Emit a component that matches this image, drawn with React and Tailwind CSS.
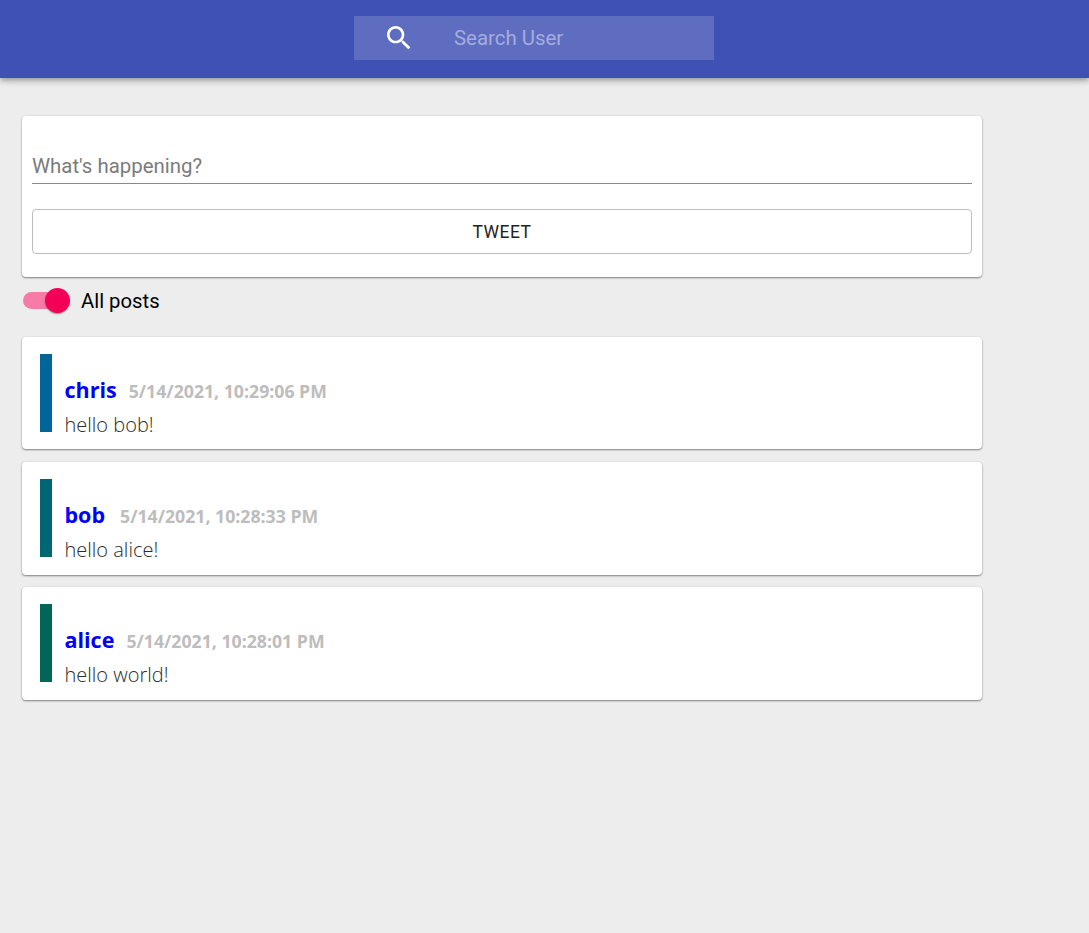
import React from "react";

const posts = [
  { name: "chris", date: "5/14/2021, 10:29:06 PM", text: "hello bob!", bar: "bg-[#006699]", gap: "ml-3" },
  { name: "bob", date: "5/14/2021, 10:28:33 PM", text: "hello alice!", bar: "bg-[#006673]", gap: "ml-[15px]" },
  { name: "alice", date: "5/14/2021, 10:28:01 PM", text: "hello world!", bar: "bg-[#006657]", gap: "ml-3" },
];

const shadow = "shadow-[0_1px_2px_0_rgba(0,0,0,0.45),0_0_2px_0_rgba(0,0,0,0.08)]";

export default function App() {
  return (
    <div className="min-h-[933px] bg-[#ededed] font-['Roboto',sans-serif]">
      <header className="h-[78px] bg-[#3f51b5] pt-4 shadow-[0_2px_4px_-1px_rgba(0,0,0,0.2),0_4px_5px_0_rgba(0,0,0,0.14),0_1px_10px_0_rgba(0,0,0,0.12)]">
        <div className="ml-[354px] flex h-11 w-[360px] items-center bg-[#5f6dc0]">
          <svg className="ml-[29px] h-8 w-8 shrink-0" viewBox="0 0 24 24" fill="#fff">
            <path d="M15.5 14h-.79l-.28-.27C15.41 12.59 16 11.11 16 9.5 16 5.91 13.09 3 9.5 3S3 5.91 3 9.5 5.91 16 9.5 16c1.61 0 3.09-.59 4.23-1.57l.27.28v.79l5 4.99L20.49 19l-4.99-5zm-6 0C7.01 14 5 11.99 5 9.5S7.01 5 9.5 5 14 7.01 14 9.5 11.99 14 9.5 14z" />
          </svg>
          <span className="ml-[39px] text-[20.4px] leading-6 text-[#a4acdc]">Search User</span>
        </div>
      </header>

      <main className="ml-[22px] w-[960px] pt-[38px]">
        <section className={`h-[161px] rounded bg-white px-2.5 pt-[35px] ${shadow}`}>
          <div className="h-[33px] border-b border-[#8a8a8a] pt-px text-[20.4px] leading-[29px] text-[#7b7b7b]">
            What's happening?
          </div>
          <div className="mt-[25px] flex h-[45px] items-center justify-center rounded border border-[#bdbdbd] pt-px text-[17.5px] font-[450] tracking-[0.45px] text-[#222]">
            TWEET
          </div>
        </section>

        <div className="mt-[11px] flex h-6 items-center">
          <div className="relative ml-px h-[17px] w-[40px] rounded-full bg-[#f87aa6]">
            <span className="absolute -top-1 left-[22px] h-[25px] w-[25px] rounded-full bg-[#f50057] shadow-[0_2px_1px_-1px_rgba(0,0,0,0.2),0_1px_1px_0_rgba(0,0,0,0.14),0_1px_3px_0_rgba(0,0,0,0.12)]" />
          </div>
          <span className="ml-[18px] pt-0.5 text-[20.3px] leading-6 text-black">All posts</span>
        </div>

        <div className="mt-[25px] flex flex-col gap-[12.8px]">
          {posts.map((p) => (
            <article key={p.name} className={`flex h-[112.4px] rounded bg-white pl-[18px] pt-[17px] ${shadow}`}>
              <div className={`h-[78px] w-3 shrink-0 ${p.bar}`} />
              <div className="ml-[12.5px] font-['Open_Sans','Noto_Sans',sans-serif]">
                <div className="mt-[22px] flex h-7 items-baseline">
                  <span className="text-[21.5px] font-bold leading-7 text-[#0000ff]">{p.name}</span>
                  <span className={`${p.gap} text-[17.7px] font-bold leading-7 text-[#bdbdbd]`}>{p.date}</span>
                </div>
                <p className="mt-[7px] text-[20px] font-light leading-7 text-[#2b2b2b]">{p.text}</p>
              </div>
            </article>
          ))}
        </div>
      </main>
    </div>
  );
}
